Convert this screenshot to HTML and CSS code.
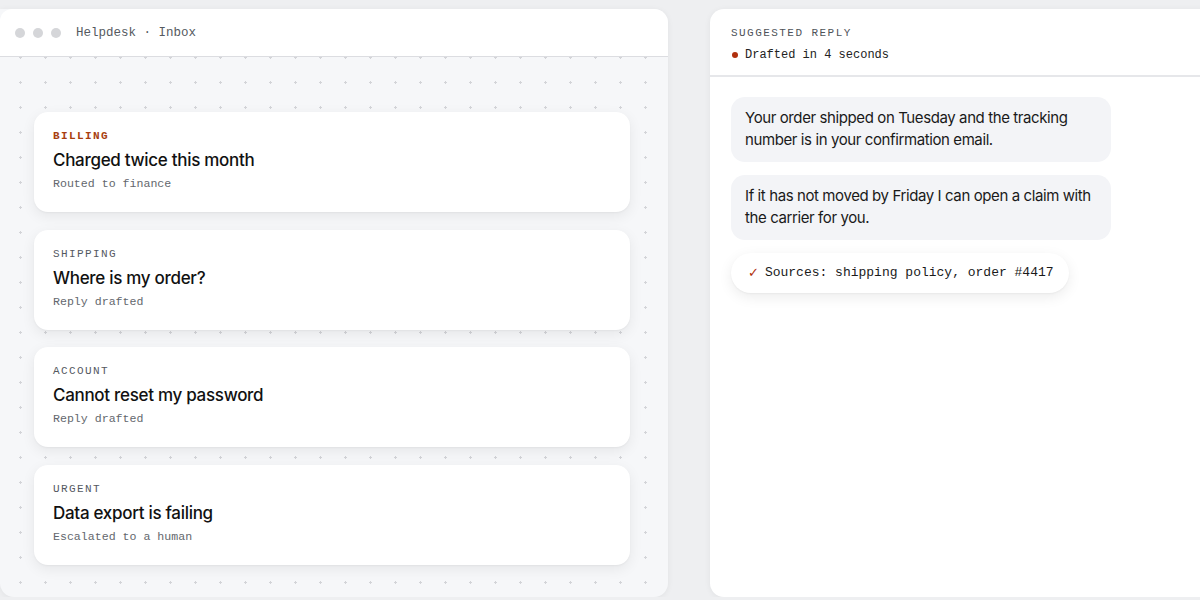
FILE: index.html
```html
<!DOCTYPE html>
<html lang="en">
<head>
  <meta charset="UTF-8">
  <title>Helpdesk · Inbox</title>
  <link rel="stylesheet" href="styles.css">
</head>
<body>

<div class="escritorio">
  <!-- ventana de la bandeja -->
  <section class="ventana">
    <header class="ventana-barra">
      <span class="punto"></span>
      <span class="punto"></span>
      <span class="punto"></span>
      <span class="ventana-titulo">Helpdesk · Inbox</span>
    </header>
    <div class="bandeja">
      <div class="ticket">
        <div class="ticket-tag tag-billing">BILLING</div>
        <div class="ticket-titulo">Charged twice this month</div>
        <div class="ticket-estado">Routed to finance</div>
      </div>
      <div class="ticket">
        <div class="ticket-tag">SHIPPING</div>
        <div class="ticket-titulo">Where is my order?</div>
        <div class="ticket-estado">Reply drafted</div>
      </div>
      <div class="ticket">
        <div class="ticket-tag">ACCOUNT</div>
        <div class="ticket-titulo">Cannot reset my password</div>
        <div class="ticket-estado">Reply drafted</div>
      </div>
      <div class="ticket">
        <div class="ticket-tag">URGENT</div>
        <div class="ticket-titulo">Data export is failing</div>
        <div class="ticket-estado">Escalated to a human</div>
      </div>
    </div>
  </section>

  <!-- panel de respuesta -->
  <section class="respuesta">
    <header class="respuesta-cabecera">
      <div class="respuesta-tag">SUGGESTED REPLY</div>
      <div class="respuesta-estado"><span class="punto-rojo"></span>Drafted in 4 seconds</div>
    </header>
    <div class="respuesta-cuerpo">
      <div class="burbuja">Your order shipped on Tuesday and the tracking number is in your confirmation email.</div>
      <div class="burbuja">If it has not moved by Friday I can open a claim with the carrier for you.</div>
      <div class="fuentes"><span class="check">✓</span>Sources: shipping policy, order #4417</div>
    </div>
  </section>
</div>

</body>
</html>
```

FILE: styles.css
```css
body {
  margin: 0;
  background-color: #eeeff1;
  font-family: Inter, "Noto Sans", sans-serif;
  color: #111;
  overflow: hidden;
}

.escritorio {
  display: grid;
  grid-template-columns: 668px 540px;
  gap: 42px;
  padding-top: 9px;
  height: 588px;
}

/* ventana izquierda */
.ventana {
  background-color: #f6f7f9;
  border-radius: 0 14px 14px 14px;
  box-shadow: 0 1px 6px rgba(0,0,0,0.06);
  display: flex;
  flex-direction: column;
  overflow: hidden;
}

.ventana-barra {
  background-color: white;
  height: 47px;
  border-bottom: 1px solid #dcdde1;
  border-radius: 12px 0 0 0;
  display: flex;
  align-items: center;
  gap: 8px;
  padding-left: 15px;
}

.punto {
  width: 10px;
  height: 10px;
  border-radius: 50%;
  background-color: #d5d6d9;
}

.ventana-titulo {
  margin-left: 7px;
  font-family: "Liberation Mono", monospace;
  font-size: 12.5px;
  color: #555a60;
}

.bandeja {
  flex: 1;
  background-image: radial-gradient(circle, #d3d4d8 1px, transparent 1.3px);
  background-size: 25px 25px;
  background-position: 8px -12px;
  padding: 55px 38px 0 34px;
  display: flex;
  flex-direction: column;
  gap: 17.5px;
}

.ticket {
  background-color: white;
  border-radius: 14px;
  height: 100px;
  box-sizing: border-box;
  padding: 18px 19px;
  box-shadow: 0 4px 14px rgba(0,0,0,0.07), 0 1px 2px rgba(0,0,0,0.04);
}

.ticket-tag {
  font-family: "Liberation Mono", monospace;
  font-size: 11px;
  letter-spacing: 1.4px;
  color: #55595f;
  line-height: 12px;
}

.tag-billing {
  color: #a8400f;
  font-weight: bold;
}

.ticket-titulo {
  font-size: 17px;
  font-weight: 500;
  letter-spacing: -0.3px;
  margin-top: 8px;
  line-height: 20px;
  color: #111;
}

.ticket-estado {
  font-family: "Liberation Mono", monospace;
  font-size: 11.6px;
  color: #63676d;
  margin-top: 7px;
}

/* panel derecho */
.respuesta {
  background-color: white;
  border-radius: 14px 0 0 14px;
  box-shadow: 0 1px 6px rgba(0,0,0,0.06);
  overflow: hidden;
}

.respuesta-cabecera {
  height: 68px;
  box-sizing: border-box;
  border-bottom: 2px solid #e6e7ea;
  padding: 18px 21px 0 21px;
}

.respuesta-tag {
  font-family: "Liberation Mono", monospace;
  font-size: 11px;
  letter-spacing: 1.45px;
  color: #4f5359;
  line-height: 12px;
}

.respuesta-estado {
  font-family: "Liberation Mono", monospace;
  font-size: 12px;
  color: #222;
  margin-top: 9px;
  display: flex;
  align-items: center;
}

.punto-rojo {
  width: 6px;
  height: 6px;
  border-radius: 50%;
  background-color: #b0300e;
  margin: 0 7px 0 1px;
}

.respuesta-cuerpo {
  padding: 20px 21px;
  display: flex;
  flex-direction: column;
  align-items: flex-start;
  gap: 13px;
}

.burbuja {
  background-color: #f3f4f7;
  border-radius: 14px;
  width: 380px;
  box-sizing: border-box;
  padding: 10px 14px 11px 14px;
  font-size: 15px;
  letter-spacing: -0.4px;
  line-height: 22px;
  color: #1a1a1a;
}

.fuentes {
  background-color: white;
  border-radius: 20px;
  box-shadow: 0 4px 14px rgba(0,0,0,0.08), 0 1px 2px rgba(0,0,0,0.04);
  padding: 12px 15px 13px 17px;
  font-family: "Liberation Mono", monospace;
  font-size: 13px;
  color: #1a1a1a;
  display: flex;
  align-items: center;
}

.check {
  color: #b0300e;
  font-family: "DejaVu Sans", sans-serif;
  font-weight: bold;
  font-size: 13px;
  margin-right: 6px;
}
```
